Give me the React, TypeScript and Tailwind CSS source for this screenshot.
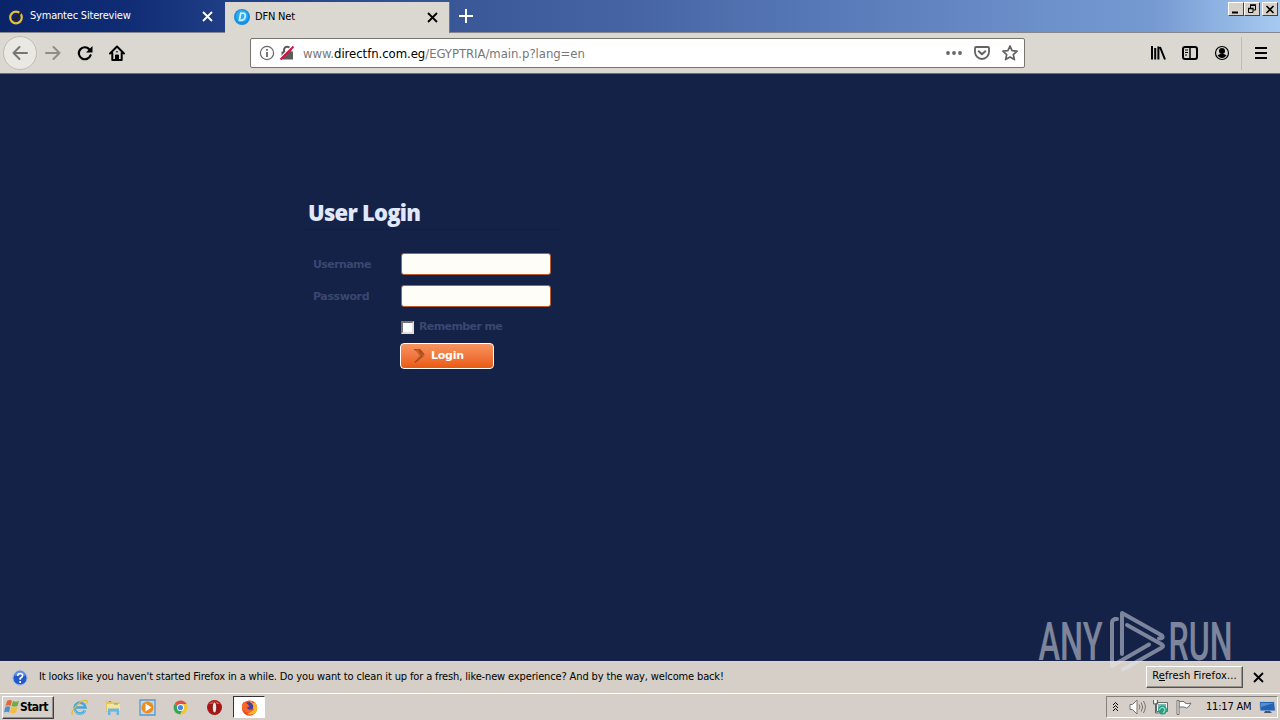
import type { ReactNode } from 'react';

const CloseIcon = ({ className = '' }: { className?: string }) => (
  <svg className={`h-[11px] w-[11px] ${className}`} viewBox="0 0 11 11" fill="none" stroke="currentColor" strokeWidth="1.8">
    <path d="M1 1l9 9M10 1L1 10" />
  </svg>
);

const TabBar = () => (
  <div className="flex h-[33px] shrink-0 border-b border-[#85878c] bg-[linear-gradient(90deg,#0a246a_0%,#0f2c75_10%,#213f86_18%,#3a5797_36%,#4765a4_50%,#587ab8_65%,#6d91cb_82%,#7599d1_90%,#a6caf0_100%)]">
    <div className="flex w-[225px] items-center pt-px pr-3 pl-2 text-white">
      <svg className="h-4 w-4" viewBox="0 0 16 16" fill="none">
        <circle cx="8" cy="8.5" r="5.8" stroke="#e8bd3c" strokeWidth="2.2" />
        <path d="M5.5 8l2.200 3L13 3" stroke="#26231d" strokeWidth="2" />
      </svg>
      <span className="ml-1.5 text-[11px] tracking-[-0.2px]">Symantec Sitereview</span>
      <CloseIcon className="ml-auto" />
    </div>
    <div className="mt-0.5 -mb-px flex w-[225px] items-center border-r border-[#777] bg-[#dbd8d1] pr-[11px] pb-px pl-[9px] text-black">
      <svg className="h-4 w-4" viewBox="0 0 16 16">
        <circle cx="8" cy="8" r="8" fill="#168fe0" />
        <circle cx="8" cy="7" r="6" fill="#2eaaf0" />
        <path d="M6.8 4.2h2q3 0 2.4 3.2-.7 4-4.2 4H5.4z" fill="none" stroke="#c9efff" strokeWidth="1.8" />
      </svg>
      <span className="ml-[5px] text-[11px] tracking-[-0.2px]">DFN Net</span>
      <CloseIcon className="ml-auto" />
    </div>
    <svg className="mt-[9px] ml-[9px] h-[14px] w-[14px]" viewBox="0 0 14 14" stroke="#fff" strokeWidth="2">
      <path d="M7 0v14M0 7h14" />
    </svg>
    <div className="mt-[2px] mr-[2px] ml-auto flex h-[14px]">
      <WindowButton><path d="M3 9.500h6" strokeWidth="2" /></WindowButton>
      <WindowButton>
        <path d="M5.500 5V2.500h5V7H8" />
        <path d="M5 2h6M3 5.500h5.500" strokeWidth="1.500" />
        <path d="M3.500 5.500h4.500v4h-4.500z" />
      </WindowButton>
      <div className="w-[2px]" />
      <WindowButton><path d="M3.500 3l7 7M10.500 3l-7 7" strokeWidth="1.600" /></WindowButton>
    </div>
  </div>
);

const WindowButton = ({ children }: { children: ReactNode }) => (
  <div className="h-[14px] w-4 border border-t-white border-r-[#404040] border-b-[#404040] border-l-white bg-[#d6d1c9]">
    <svg className="h-3 w-[14px]" viewBox="0 0 14 12" fill="none" stroke="#000">{children}</svg>
  </div>
);

const NavBar = () => (
  <div className="flex h-[41px] shrink-0 items-center border-b border-[#6b7079] bg-[#dbd8d1] pl-[3px]">
    <div className="flex h-[34px] w-[34px] items-center justify-center rounded-full border border-[#c0bdb6] bg-[#eae8e3]">
      <svg className="h-4 w-4" viewBox="0 0 16 16" fill="none" stroke="#777670" strokeWidth="2" strokeLinecap="round" strokeLinejoin="round">
        <path d="M15 8H1.500M7.500 2l-6 6 6 6" />
      </svg>
    </div>
    <svg className="ml-2 h-4 w-4" viewBox="0 0 16 16" fill="none" stroke="#8f8d88" strokeWidth="2" strokeLinecap="round" strokeLinejoin="round">
      <path d="M1 8h13.500M8.500 2l6 6-6 6" />
    </svg>
    <svg className="ml-4 h-4 w-4" viewBox="0 0 16 16" fill="none" stroke="#000" strokeWidth="2.200">
      <path d="M13.500 10.300A6 6 0 1 1 12.300 4.200" strokeLinecap="round" />
      <path d="M15.500 1v6.500H9z" fill="#000" stroke="none" />
    </svg>
    <svg className="ml-4 h-4 w-4" viewBox="0 0 16 16" fill="none" stroke="#000" strokeWidth="2" strokeLinecap="round" strokeLinejoin="round">
      <path d="M1 8.500L8 1.500l7 7M3.300 8v7h9.400V8" />
      <path d="M6.500 14.500V10h3v4.500z" fill="#000" strokeWidth="1" />
      <path d="M7.300 6.800h1.400" strokeWidth="1" />
    </svg>

    <div className="ml-[125px] flex h-[30px] w-[775px] items-center rounded-[2px] border border-[#77756f] bg-white pr-[6px] pl-2">
      <svg className="h-4 w-4" viewBox="0 0 16 16" fill="none" stroke="#686868">
        <circle cx="8" cy="8" r="6.600" strokeWidth="1.200" />
        <path d="M8 7v5M8 4v1.800" strokeWidth="1.800" />
      </svg>
      <svg className="ml-1 h-4 w-4" viewBox="0 0 16 16" fill="none">
        <path d="M5 7V5a3.200 3.200 0 0 1 6.400 0v2" stroke="#5c5c5c" strokeWidth="2" />
        <path d="M2.500 6.500h11.500v8H2.500z" fill="#5c5c5c" />
        <path d="M0 14L13.500 .5" stroke="#fff" strokeWidth="1.500" />
        <path d="M1.500 14.500L14.500 1.500" stroke="#d9134b" strokeWidth="2" />
      </svg>
      <span className="mt-0.5 ml-2 text-[13px] tracking-[-0.05px] text-[#777]">
        www.<span className="text-black">directfn.com.eg</span>/EGYPTRIA/main.p?lang=en
      </span>
      <svg className="ml-auto h-4 w-4" viewBox="0 0 16 16" fill="#666">
        <circle cx="2" cy="8" r="1.900" /><circle cx="8" cy="8" r="1.900" /><circle cx="14" cy="8" r="1.900" />
      </svg>
      <svg className="ml-3 h-4 w-4" viewBox="0 0 16 16" fill="none" stroke="#626262" strokeWidth="2" strokeLinecap="round" strokeLinejoin="round">
        <path d="M2 2h12q1 0 1 1v4a7 7 0 0 1-14 0V3q0-1 1-1z" strokeWidth="1.800" />
        <path d="M4.700 6.300L8 9.300l3.300-3" />
      </svg>
      <svg className="ml-3 h-4 w-4" viewBox="0 0 16 16" fill="none" stroke="#626262" strokeWidth="1.700" strokeLinejoin="round">
        <path d="M8 1l2.100 4.700 5 .5-3.800 3.400 1.100 5L8 12l-4.400 2.600 1.100-5L.9 6.200l5-.5z" />
      </svg>
    </div>

    <div className="ml-auto flex h-full items-center">
      <svg className="h-4 w-4" viewBox="0 0 16 16" stroke="#000" strokeWidth="2">
        <path d="M2 1v13.500M5.200 3v11.500M8.400 1.500v13M10 2l5 12.500" />
      </svg>
      <svg className="ml-4 h-4 w-4" viewBox="0 0 16 16" fill="none" stroke="#000">
        <rect x="1" y="2" width="14" height="12" rx="2" strokeWidth="2" />
        <path d="M8 2v12" strokeWidth="1.500" />
        <path d="M3 5h3M3 7.500h3M3 10h2" />
      </svg>
      <svg className="ml-4 h-4 w-4" viewBox="0 0 16 16">
        <circle cx="8" cy="8" r="6.500" fill="none" stroke="#000" strokeWidth="1.200" />
        <circle cx="8" cy="6" r="3" />
        <path d="M3.500 10q1.500 0 2.500-1h4q1 1 2.500 1Q11 13 8 13t-4.500-3z" />
      </svg>
      <div className="ml-[11px] h-[33px] w-px bg-[#bfbcb5]" />
      <svg className="mr-[11px] ml-[11px] h-4 w-4" viewBox="0 0 16 16" stroke="#000" strokeWidth="2">
        <path d="M2 3h12M2 8h12M2 13h12" />
      </svg>
    </div>
  </div>
);

const LoginForm = () => (
  <main className="min-h-0 flex-1 bg-[#142248] pt-[124px] pl-[302px]">
    <div className="w-[258px]">
      <h1 className="h-[32px] border-b border-[#111e41] pl-1.5 font-['Open_Sans',sans-serif] text-[22px] leading-[29px] font-extrabold tracking-[-0.75px] text-[#e1e8fb]">
        User Login
      </h1>
      <div className="mt-[23px] flex h-[22px] items-center pl-[11px]">
        <label htmlFor="username" className="mt-[3px] w-[88px] font-['DejaVu_Sans',sans-serif] text-[11px] font-bold tracking-[-0.6px] text-[#3a4770]">Username</label>
        <input id="username" className="h-[22px] w-[150px] rounded-[3px] border border-[#b85d30] bg-[#fffdf7] outline-none" />
      </div>
      <div className="mt-2.5 flex h-[22px] items-center pl-[11px]">
        <label htmlFor="password" className="mt-[3px] w-[88px] font-['DejaVu_Sans',sans-serif] text-[11px] font-bold tracking-[-0.4px] text-[#3a4770]">Password</label>
        <input id="password" type="password" className="h-[22px] w-[150px] rounded-[3px] border border-[#b85d30] bg-[#fffdf7] outline-none" />
      </div>
      <div className="mt-[13px] flex h-[14px] items-center pl-[99px]">
        <input id="remember" type="checkbox" className="h-[13px] w-[13px] appearance-none border-2 border-t-[#77736e] border-r-[#e0ded8] border-b-[#e0ded8] border-l-[#77736e] bg-white" />
        <label htmlFor="remember" className="mt-px ml-[5px] font-['DejaVu_Sans',sans-serif] text-[11px] font-bold tracking-[-0.6px] whitespace-nowrap text-[#3a4770]">Remember me</label>
      </div>
      <button className="mt-[9px] ml-[98px] flex h-[26px] w-[94px] items-center rounded-[4px] border border-white bg-linear-to-b from-[#f7935f] to-[#ea5a08] pl-3 text-white">
        <svg className="h-[14px] w-3" viewBox="0 0 12 14">
          <path d="M1 0h6l5 6.500-9 7H1l5.500-7z" fill="#d0652b" />
          <path d="M1 .5h5.500L11 5.500M2 13.500l7-6.500-3-5" fill="none" stroke="#a94c20" strokeWidth="1.500" />
        </svg>
        <span className="mt-px ml-1.5 font-['DejaVu_Sans',sans-serif] text-[11px] font-bold tracking-[-0.25px]">Login</span>
      </button>
    </div>
  </main>
);

const Notification = () => (
  <div className="flex h-8 shrink-0 items-center border-t border-[#d6d6df] bg-[#d5cfc7] pr-4 pl-3">
    <svg className="h-4 w-4" viewBox="0 0 16 16">
      <circle cx="8" cy="8" r="7.200" fill="#2459c5" stroke="#a9c1ea" strokeWidth="1.200" />
      <path d="M2.500 6a5.500 5.500 0 0 1 11 0q-5-2-11 0z" fill="#628ce0" />
      <path d="M5.700 6q0-2.500 2.500-2.500 2.400 0 2.400 2Q10.600 7 8.200 8.300v1.500M8.200 11v2" fill="none" stroke="#fff" strokeWidth="1.700" />
    </svg>
    <span className="ml-[11px] text-[11px] tracking-[-0.14px] whitespace-nowrap">
      It looks like you haven't started Firefox in a while. Do you want to clean it up for a fresh, like-new experience? And by the way, welcome back!
    </span>
    <button className="mr-[10px] mb-0.5 ml-auto h-[22px] w-[97px] border border-t-white border-r-[#55524e] border-b-[#55524e] border-l-white text-[11px] tracking-[0.1px] whitespace-nowrap shadow-[inset_-1px_-1px_#99948d]">
      R<span className="underline">e</span>fresh Firefox...
    </button>
    <CloseIcon />
  </div>
);

const Taskbar = () => (
  <div className="flex h-[27px] shrink-0 items-center border-t border-white bg-[#d6cec8] pl-0.5">
    <button className="flex h-[23px] w-[52px] items-center border border-t-white border-r-[#404040] border-b-[#404040] border-l-white pl-px shadow-[inset_-1px_-1px_#928d87]">
      <svg className="h-4 w-4" viewBox="0 0 16 16">
        <path d="M3 2q3-2 5 0L6.500 7q-2-1.500-5 0z" fill="#e56732" />
        <path d="M9 2q3 1.500 6 0l-1.500 5q-3 1.500-6 0z" fill="#70ad45" />
        <path d="M1.300 8q3-1.500 5 0L5 13.500q-2-1.500-5 0z" fill="#4f8dcf" />
        <path d="M7.300 8q3 1.500 6 0L12 13.500q-3 1.500-6 0z" fill="#f4bc38" />
      </svg>
      <span className="text-[12px] font-bold tracking-[-0.600px]">Start</span>
    </button>
    <div className="ml-[17px] flex items-center gap-[17px]">
      <svg className="h-[17px] w-[17px]" viewBox="0 0 17 17" fill="none">
        <path d="M14 11.500A5.500 5.500 0 1 1 14.500 8.500H5" stroke="#48a6da" strokeWidth="2.600" />
        <path d="M14 11.500A5.500 5.500 0 0 1 3.500 11" stroke="#83cdec" strokeWidth="1" />
        <path d="M1.500 15.500C-1 12 10 0 15.500 1.500q1.500.5 0 3" stroke="#e4b93d" strokeWidth="1.300" />
      </svg>
      <svg className="h-[17px] w-[17px]" viewBox="0 0 17 17">
        <path d="M1 2h6l1 1.500h7V13H1z" fill="#e5c562" />
        <path d="M2 5h13v7H2z" fill="#f7e49a" />
        <path d="M3 16V9.500h11V16h-2.500v-3.500h-6V16z" fill="#6ab6df" />
        <path d="M4 2.500h2M9 5h4" stroke="#6da65a" />
      </svg>
      <svg className="h-[17px] w-[17px]" viewBox="0 0 17 17">
        <path d="M1 1h15v15H1z" fill="#b6d9ef" stroke="#5e98c8" strokeWidth="1.300" />
        <circle cx="8.500" cy="8.500" r="6" fill="#f18b1e" />
        <path d="M6.500 4.500l6 4-6 4z" fill="#fff" />
      </svg>
      <svg className="-ml-px h-[17px] w-[17px]" viewBox="0 0 17 17">
        <path d="M8.500 8.500L2.600 5A7 7 0 0 1 14.600 5z" fill="#df5041" />
        <path d="M8.500 8.500H15.400A7 7 0 0 1 8 15.500z M8.500 5h6.200l.8 3.500h-7z" fill="#f3c433" />
        <path d="M2.600 5A7 7 0 0 0 8 15.500l2-4-1.500-3z" fill="#39a452" />
        <circle cx="8.500" cy="8.500" r="3.500" fill="#fff" />
        <circle cx="8.500" cy="8.500" r="2.600" fill="#4287e9" />
      </svg>
      <svg className="h-[17px] w-[17px]" viewBox="0 0 17 17">
        <circle cx="8.500" cy="8.500" r="7.500" fill="#a91515" />
        <path d="M3 5a7 7 0 0 1 11 0z" fill="#db5148" />
        <ellipse cx="8.500" cy="8.500" rx="2.300" ry="5.500" fill="#eee5e0" stroke="#700c0c" />
      </svg>
    </div>
    <div className="ml-2.5 flex h-[22px] w-8 items-center justify-center border border-t-[#333] border-r-white border-b-white border-l-[#333] bg-white">
      <svg className="h-[17px] w-[17px]" viewBox="0 0 16 16">
        <circle cx="8" cy="8.500" r="7.200" fill="#ee4b2b" />
        <path d="M8 1q2 1 3 3l2-1q4 5 1.500 9T6 14l6-4z" fill="#f9b52c" />
        <circle cx="7.500" cy="7" r="4" fill="#4b3d9f" />
        <path d="M.9 7q0-3 2-5v2q2-.5 3.500 1L8 7 5.500 8q1 3 5 1.500-1 4-5 3T.9 7z" fill="#f46828" />
      </svg>
    </div>

    <div className="mr-[2px] ml-auto flex h-[22px] w-[172px] items-center border border-t-[#85817b] border-r-white border-b-white border-l-[#85817b] pl-[5px]">
      <svg className="mb-0.5 h-3 w-[7px]" viewBox="0 0 7 12" fill="none" stroke="#000" strokeWidth="1.400">
        <path d="M1 5l2.500-2.500L6 5M1 8l2.500-2.500L6 8M1 11l2.500-2.500L6 11" strokeWidth="1" />
      </svg>
      <svg className="ml-2.5 h-4 w-[17px]" viewBox="0 0 17 16" fill="none" stroke="#77746f">
        <path d="M1 5.500h2.500L8 1v14l-4.500-4.500H1z" fill="#fff" />
        <path d="M10 5.500q2 2.500 0 5M12.200 3.500q3 4.500 0 9M14.400 2q4 6 0 12" />
      </svg>
      <svg className="ml-[6px] h-4 w-4" viewBox="0 0 16 16">
        <path d="M4.500 3.500h11v9h-11z" fill="#e9f2f0" stroke="#65706b" />
        <path d="M6 5h8v6H6z" fill="#79b8ba" />
        <path d="M1.500 1v4h4V1M3.500 5v9h3" fill="none" stroke="#5f625f" />
        <path d="M2.500 1h2v3h-2z" fill="#fff" />
        <circle cx="10.500" cy="11" r="4.500" fill="#299b83" />
        <path d="M7 11q3-4 5-2t-1 5" fill="none" stroke="#8fdfb7" strokeWidth="1.300" />
      </svg>
      <svg className="ml-2 h-4 w-4" viewBox="0 0 16 16" fill="#fff" stroke="#72706c">
        <path d="M3 2.500h5l1 1.500q3 1.500 6 0-1.500 4-4.500 5L8 8H3z" />
        <path d="M1 1.500h2v14H1z" />
      </svg>
      <span className="mt-px ml-[14px] w-[47px] text-[11px] tracking-[-0.200px] whitespace-nowrap">11:17 AM</span>
      <svg className="ml-[6px] h-4 w-[17px]" viewBox="0 0 17 16">
        <path d="M.5 2.500h15l1 9.500H1z" fill="#2463b4" stroke="#bfcbdc" />
        <path d="M2 4h13L2 8z" fill="#568fd1" />
        <path d="M6 12h5l2 2H5z" fill="#4b5460" />
      </svg>
    </div>
  </div>
);

const Watermark = () => (
  <svg className="pointer-events-none absolute top-[600px] left-[1034px] h-[84px] w-[206px] opacity-50" viewBox="1034 600 206 84" fill="none" stroke="#e4e7ee" strokeLinejoin="round" strokeLinecap="round">
    <g fill="#e4e7ee" stroke="none" fontFamily="Roboto, sans-serif" fontSize="53" fontWeight="500">
      <text x="1038.500" y="660" textLength="64" lengthAdjust="spacingAndGlyphs">ANY</text>
      <text x="1168.500" y="660" textLength="64" lengthAdjust="spacingAndGlyphs">RUN</text>
    </g>
    <path d="M1117 619h-2q-3 1-3 4v43l37-21.500" strokeWidth="4" />
    <path d="M1122 654v-41l40 22.500q2 3-3 3" strokeWidth="4" />
    <path d="M1127 625l35 19.500q2 1.500 0 3L1123 669.500" strokeWidth="4" />
  </svg>
);

export default function App() {
  return (
    <div className="relative flex h-[720px] w-[1280px] flex-col overflow-hidden bg-[#142248] font-['DejaVu_Sans_Condensed','DejaVu_Sans',sans-serif] text-black">
      <TabBar />
      <NavBar />
      <LoginForm />
      <Notification />
      <Taskbar />
      <Watermark />
    </div>
  );
}
